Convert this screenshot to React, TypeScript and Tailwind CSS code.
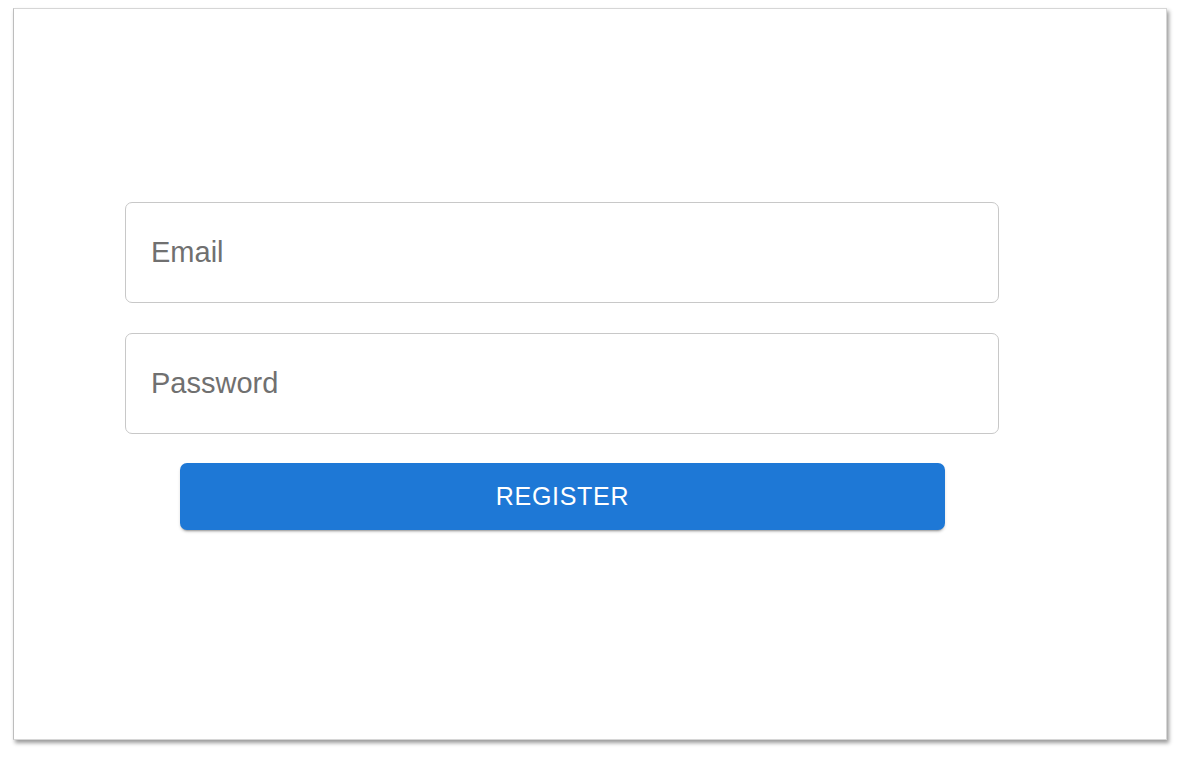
export default function App() {
  return (
    <div className="min-h-[757px] w-[1181px] bg-white pl-[13px] pt-[8px]" style={{ fontFamily: '"Liberation Sans", Arial, sans-serif' }}>
      {/* Card */}
      <div className="h-[732px] w-[1154px] border border-[#d6d6d6] border-l-[#bdbdbd] bg-white shadow-[2px_3px_4px_rgba(0,0,0,0.4)]">
        <form className="flex flex-col pl-[111px] pt-[193px]" onSubmit={(e) => e.preventDefault()}>
          <input
            type="email"
            placeholder="Email"
            className="h-[101px] w-[874px] rounded-[7px] border border-[#c8c8c8] px-[25px] text-[29px] text-[#222] outline-none placeholder:text-[#707070]"
          />
          <input
            type="password"
            placeholder="Password"
            className="mt-[30px] h-[101px] w-[874px] rounded-[7px] border border-[#c8c8c8] px-[25px] text-[29px] text-[#222] outline-none placeholder:text-[#707070]"
          />
          <button
            type="submit"
            className="ml-[55px] mt-[29px] h-[67px] w-[765px] rounded-[7px] bg-[#1e78d6] text-[25px] font-medium uppercase tracking-[0.7px] text-white shadow-[0_3px_2px_-2px_rgba(0,0,0,0.3),0_2px_3px_0_rgba(0,0,0,0.14)]"
          >
            Register
          </button>
        </form>
      </div>
    </div>
  );
}
